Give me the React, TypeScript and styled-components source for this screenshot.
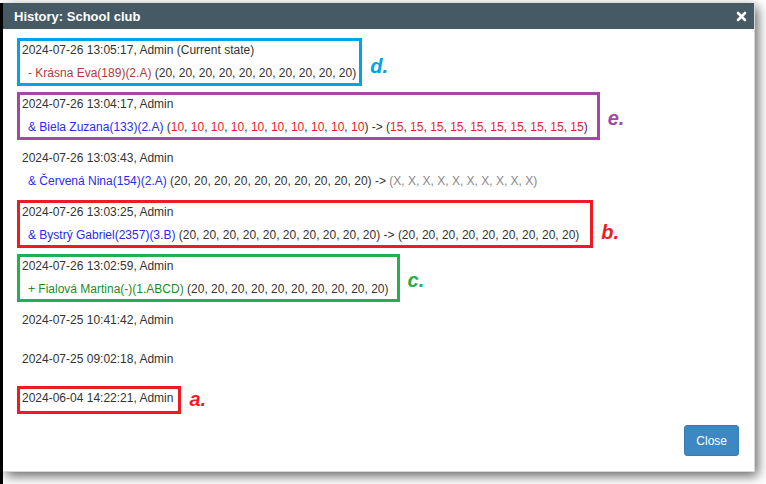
import React from "react";
import styled, { createGlobalStyle } from "styled-components";

const Global = createGlobalStyle`
  html, body { margin: 0; padding: 0; background: #fff; }
  body { font-family: "Liberation Sans", Arial, sans-serif; }
`;

const Backdrop = styled.div`
  margin-top: 3px;
  height: 481px;
  border-left: 3px solid #000;
  box-sizing: border-box;
`;

const Dialog = styled.div`
  width: 751px;
  height: 468px;
  display: flex;
  flex-direction: column;
  background: #fff;
  box-shadow: 3px 4px 11px rgba(0, 0, 0, 0.6);
  border-right: 1px solid #d8d8d8;
  border-bottom: 1px solid #d8d8d8;
`;

const Header = styled.div`
  height: 26px;
  flex: none;
  display: flex;
  align-items: center;
  justify-content: space-between;
  padding: 0 7px 0 11px;
  background: #465a65;
  color: #fff;
`;

const Title = styled.div`
  font-family: "Liberation Sans Narrow", "Arial Narrow", "Liberation Sans", Arial, sans-serif;
  font-stretch: condensed;
  font-size: 13px;
  font-weight: bold;
`;

const CloseX = styled.button`
  border: 0;
  background: none;
  padding: 0;
  width: 11px;
  height: 11px;
  display: flex;
  cursor: pointer;
`;

const Body = styled.div`
  flex: 1;
  padding: 9px 14px 0;
  font-size: 12px;
  color: #333;
`;

const Entry = styled.div`
  display: flex;
  align-items: flex-end;
  margin-bottom: 6px;
  white-space: nowrap;
`;

const Frame = styled.div<{ $color?: string; $pr: number; $pb: number }>`
  border: 3px solid ${(p) => p.$color || "transparent"};
  padding: 2px ${(p) => p.$pr}px ${(p) => p.$pb}px 2px;
`;

const DateLine = styled.div`
  line-height: 15px;
`;

const ChangeLine = styled.div`
  margin-top: 8px;
  padding-left: 6px;
  line-height: 15px;
`;

const Mark = styled.span<{ $color: string; $lift: number }>`
  margin-left: 8px;
  margin-bottom: ${(p) => p.$lift}px;
  font-size: 20px;
  line-height: 20px;
  font-weight: bold;
  font-style: italic;
  color: ${(p) => p.$color};
`;

type Kind = "plain" | "removed" | "edited" | "added" | "hi" | "muted";

const kindColor: Record<Kind, string> = {
  plain: "#333",
  removed: "#b23a3a",
  edited: "#2a2af0",
  added: "#1f8c24",
  hi: "#ee1c24",
  muted: "#888",
};

const Seg = styled.span<{ $kind: Kind }>`
  color: ${(p) => kindColor[p.$kind]};
`;

const Footer = styled.div`
  display: flex;
  justify-content: flex-end;
  padding: 0 15px 15px;
`;

const Button = styled.button`
  height: 31px;
  padding: 0 11px;
  border: 1px solid #367fb0;
  border-radius: 3px;
  background: #3d88c3;
  color: #fff;
  font-family: "Liberation Sans", Arial, sans-serif;
  font-size: 12px;
  cursor: pointer;
`;

type S = { t: string; k: Kind };

const list = (vals: string[], k: Kind): S[] => {
  const out: S[] = [{ t: "(", k: "plain" }];
  vals.forEach((v, i) => {
    out.push({ t: v, k });
    if (i < vals.length - 1) out.push({ t: ", ", k: "plain" });
  });
  out.push({ t: ")", k: "plain" });
  return out;
};

const rep = (v: string, n: number) => Array.from({ length: n }, () => v);
const tuple = (v: string, n: number) => "(" + rep(v, n).join(", ") + ")";

type Item = {
  date: string;
  change?: S[];
  mark?: { color: string; label: string; lift: number };
  pr?: number;
  pb?: number;
};

const BLUE = "#00a2e8";
const PURPLE = "#a349a4";
const RED = "#ed1c24";
const GREEN = "#22b14c";

const items: Item[] = [
  {
    date: "2024-07-26 13:05:17, Admin (Current state)",
    change: [
      { t: "- Krásna Eva(189)(2.A)", k: "removed" },
      { t: " " + tuple("20", 10), k: "plain" },
    ],
    mark: { color: BLUE, label: "d.", lift: 10 },
    pr: 3,
  },
  {
    date: "2024-07-26 13:04:17, Admin",
    change: [
      { t: "& Biela Zuzana(133)(2.A)", k: "edited" },
      { t: " ", k: "plain" },
      ...list(rep("10", 10), "hi"),
      { t: " -> ", k: "plain" },
      ...list(rep("15", 10), "hi"),
    ],
    mark: { color: PURPLE, label: "e.", lift: 12 },
    pr: 9,
  },
  {
    date: "2024-07-26 13:03:43, Admin",
    change: [
      { t: "& Červená Nina(154)(2.A)", k: "edited" },
      { t: " " + tuple("20", 10) + " -> ", k: "plain" },
      { t: tuple("X", 10), k: "muted" },
    ],
  },
  {
    date: "2024-07-26 13:03:25, Admin",
    change: [
      { t: "& Bystrý Gabriel(2357)(3.B)", k: "edited" },
      { t: " " + tuple("20", 10) + " -> " + tuple("20", 9), k: "plain" },
    ],
    mark: { color: RED, label: "b.", lift: 6 },
    pr: 11,
  },
  {
    date: "2024-07-26 13:02:59, Admin",
    change: [
      { t: "+ Fialová Martina(-)(1.ABCD)", k: "added" },
      { t: " " + tuple("20", 10), k: "plain" },
    ],
    mark: { color: GREEN, label: "c.", lift: 12 },
    pr: 8,
  },
  { date: "2024-07-25 10:41:42, Admin", change: [] },
  { date: "2024-07-25 09:02:18, Admin", change: [] },
  {
    date: "2024-06-04 14:22:21, Admin",
    mark: { color: RED, label: "a.", lift: 5 },
    pr: 5,
    pb: 5,
  },
];

export default function App() {
  return (
    <>
      <Global />
      <Backdrop>
        <Dialog>
          <Header>
            <Title>History: School club</Title>
            <CloseX aria-label="Close">
              <svg width="11" height="11" viewBox="0 0 11 11">
                <path
                  d="M2 2 L9 9 M9 2 L2 9"
                  stroke="#fff"
                  strokeWidth="2.6"
                  strokeLinecap="round"
                />
              </svg>
            </CloseX>
          </Header>
          <Body>
            {items.map((it, i) => (
              <Entry key={i}>
                <Frame $color={it.mark?.color} $pr={it.pr ?? 2} $pb={it.pb ?? 2}>
                  <DateLine>{it.date}</DateLine>
                  {it.change && (
                    <ChangeLine>
                      {it.change.map((s, j) => (
                        <Seg key={j} $kind={s.k}>
                          {s.t}
                        </Seg>
                      ))}
                    </ChangeLine>
                  )}
                </Frame>
                {it.mark && (
                  <Mark $color={it.mark.color} $lift={it.mark.lift}>
                    {it.mark.label}
                  </Mark>
                )}
              </Entry>
            ))}
          </Body>
          <Footer>
            <Button>Close</Button>
          </Footer>
        </Dialog>
      </Backdrop>
    </>
  );
}
